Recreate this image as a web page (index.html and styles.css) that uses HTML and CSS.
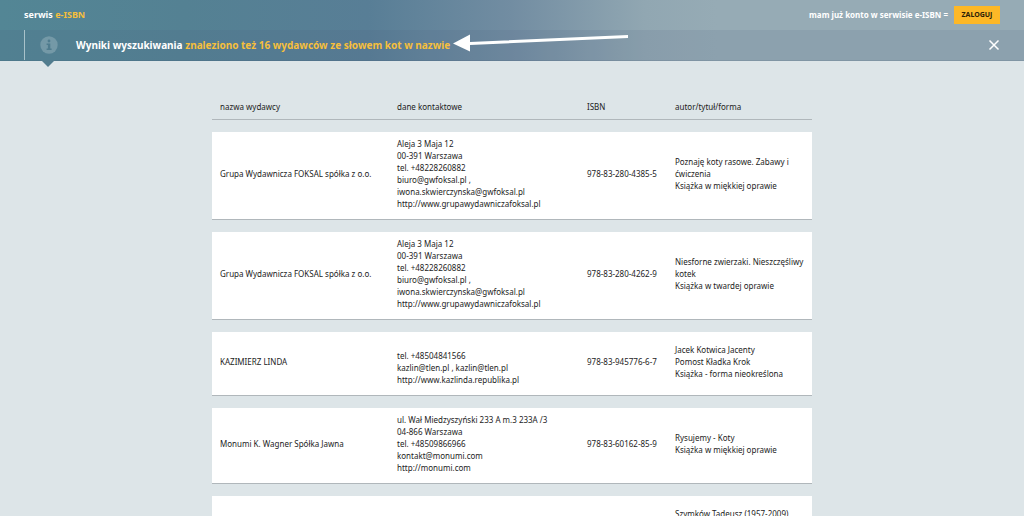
FILE: index.html
```html
<!DOCTYPE html>
<html lang="pl">
<head>
<meta charset="utf-8">
<meta name="viewport" content="width=device-width, initial-scale=1">
<title>serwis e-ISBN</title>
<link rel="stylesheet" href="styles.css">
</head>
<body>
<header class="header">
  <div class="topbar">
    <a class="brand" href="#">serwis <span class="accent">e-ISBN</span></a>
    <div class="account">
      <span>mam już konto w serwisie e-ISBN =</span>
      <button class="login" type="button">ZALOGUJ</button>
    </div>
  </div>
  <div class="notice">
    <div class="notice-body">
      <span class="info">
        <svg class="info-icon" viewBox="0 0 18 18" aria-hidden="true">
          <circle cx="9" cy="9" r="8.7" fill="#7499a7"/>
          <circle cx="9" cy="5" r="1.4" fill="#4f7c8e"/>
          <path d="M6.6 7.5h3.7v5h1.3v1.4H6.6v-1.4h1.3V8.900H6.600z" fill="#4f7c8e"/>
        </svg>
      </span>
      <h1 class="notice-title">Wyniki wyszukiwania <a class="accent" href="#">znaleziono też 16 wydawców ze słowem kot w nazwie</a></h1>
      <svg class="arrow" viewBox="0 0 176 20" aria-hidden="true">
        <path d="M0 9.500 17 0.500V8L175 1V4L17 11V17.500z" fill="#fff"/>
      </svg>
    </div>
    <button class="close" type="button" aria-label="Zamknij">
      <svg viewBox="0 0 12 12" aria-hidden="true"><path d="M1.500 1.500 10.500 10.500M10.500 1.500 1.500 10.500" stroke="#fff" stroke-width="1.500"/></svg>
    </button>
  </div>
</header>
<main class="content">
  <table class="results">
    <colgroup><col class="col-name"><col class="col-contact"><col class="col-isbn"><col class="col-title"></colgroup>
    <thead>
      <tr><th>nazwa wydawcy</th><th>dane kontaktowe</th><th>ISBN</th><th>autor/tytuł/forma</th></tr>
    </thead>
    <tbody>
      <tr>
        <td>Grupa Wydawnicza FOKSAL spółka z o.o.</td>
        <td>Aleja 3 Maja 12<br>00-391 Warszawa<br>tel. +48228260882<br>biuro@gwfoksal.pl ,<br>iwona.skwierczynska@gwfoksal.pl<br>http://www.grupawydawniczafoksal.pl</td>
        <td>978-83-280-4385-5</td>
        <td>Poznaję koty rasowe. Zabawy i ćwiczenia<br>Książka w miękkiej oprawie</td>
      </tr>
      <tr>
        <td>Grupa Wydawnicza FOKSAL spółka z o.o.</td>
        <td>Aleja 3 Maja 12<br>00-391 Warszawa<br>tel. +48228260882<br>biuro@gwfoksal.pl ,<br>iwona.skwierczynska@gwfoksal.pl<br>http://www.grupawydawniczafoksal.pl</td>
        <td>978-83-280-4262-9</td>
        <td>Niesforne zwierzaki. Nieszczęśliwy kotek<br>Książka w twardej oprawie</td>
      </tr>
      <tr>
        <td>KAZIMIERZ LINDA</td>
        <td><br>tel. +48504841566<br>kazlin@tlen.pl , kazlin@tlen.pl<br>http://www.kazlinda.republika.pl</td>
        <td>978-83-945776-6-7</td>
        <td>Jacek Kotwica Jacenty<br>Pomost Kładka Krok<br>Książka - forma nieokreślona</td>
      </tr>
      <tr>
        <td>Monumi K. Wagner Spółka Jawna</td>
        <td>ul. Wał Miedzyszyński 233 A m.3 233A /3<br>04-866 Warszawa<br>tel. +48509866966<br>kontakt@monumi.com<br>http://monumi.com</td>
        <td>978-83-60162-85-9</td>
        <td>Rysujemy - Koty<br>Książka w miękkiej oprawie</td>
      </tr>
      <tr>
        <td></td>
        <td><br><br><br><br></td>
        <td></td>
        <td>Szymków Tadeusz (1957-2009)<br><br><br></td>
      </tr>
    </tbody>
  </table>
</main>
</body>
</html>
```
FILE: styles.css
```css
* { box-sizing: border-box; }

html { background: #dde5e8; }

body {
  margin: 0;
  font-family: "Noto Sans", "Open Sans", sans-serif;
  font-size: 8px;
  line-height: 12px;
  color: #1c1c1c;
}

a { color: inherit; text-decoration: none; }

button {
  font: inherit;
  border: 0;
  padding: 0;
  cursor: pointer;
}

.header {
  background: linear-gradient(90deg, #538695 0%, #548193 18%, #587e96 36%, #728da2 50%, #91a7b2 63%, #96abb5 70%, #96abb5 100%);
  color: #fff;
  font-weight: 700;
}

.topbar {
  display: flex;
  justify-content: space-between;
  align-items: center;
  height: 30px;
  padding: 0 24px;
}

.brand { font-size: 9px; }

.accent { color: #f6bf3c; }

.account {
  display: flex;
  align-items: center;
  gap: 6px;
}

.login {
  width: 46px;
  height: 18px;
  background: #fdb827;
  color: #2c2108;
  font-size: 7px;
  font-weight: 700;
}

.notice {
  display: flex;
  justify-content: space-between;
  height: 31px;
  padding: 0 24px;
  background: rgba(70, 90, 120, 0.12);
  border-bottom: 1px solid rgba(60, 80, 105, 0.15);
}

.notice-body {
  position: relative;
  display: flex;
  align-items: center;
  border-left: 1px solid #a9c2ca;
}

.info {
  position: relative;
  display: flex;
  align-items: center;
  align-self: stretch;
  padding: 0 18px 0 15px;
}

.info::after {
  content: "";
  position: absolute;
  top: 100%;
  left: 16px;
  border: 7px solid transparent;
  border-top-color: #517c8e;
  border-bottom: 0;
}

.info-icon { width: 18px; height: 18px; }

.notice-title {
  margin: 0;
  font-size: 10px;
  line-height: 16px;
}

.arrow {
  position: absolute;
  left: 100%;
  top: 4px;
  width: 176px;
  height: 20px;
  margin-left: 3px;
}

.close {
  align-self: center;
  width: 12px;
  height: 12px;
  background: none;
}

.close svg { display: block; width: 12px; height: 12px; }

.content {
  max-width: 600px;
  margin: 0 auto;
  padding-top: 22px;
}

.results {
  width: 100%;
  table-layout: fixed;
  border-collapse: separate;
  border-spacing: 0 12px;
}

.col-name { width: 177px; }
.col-contact { width: 190px; }
.col-isbn { width: 88px; }

.results th,
.results td {
  text-align: left;
  vertical-align: middle;
  font-weight: 400;
  border-bottom: 1px solid #b0b7bb;
}

.results th { padding: 6px 8px; }

.results td {
  background: #fff;
  padding: 6px 8px 9px;
}
```
